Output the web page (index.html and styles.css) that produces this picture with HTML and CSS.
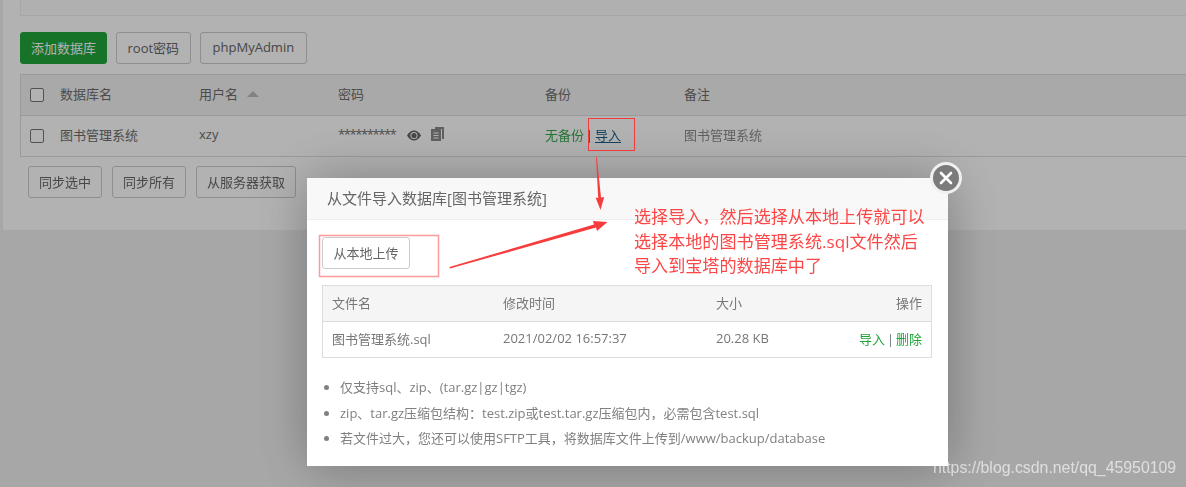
FILE: index.html
```html
<!DOCTYPE html>
<html lang="zh-CN">
<head>
<meta charset="utf-8">
<title>数据库</title>
<link rel="stylesheet" href="styles.css">
</head>
<body>
<main class="panel">
  <div class="topbox"></div>
  <div class="toolbar">
    <button class="btn btn-green">添加数据库</button>
    <button class="btn btn-latin">root密码</button>
    <button class="btn btn-php">phpMyAdmin</button>
  </div>
  <div class="dbtable">
    <div class="dbrow dbhead">
      <span class="check"></span>
      <span>数据库名</span>
      <span class="sortcell">用户名<i class="sort"></i></span>
      <span>密码</span>
      <span>备份</span>
      <span>备注</span>
    </div>
    <div class="dbrow">
      <span class="check"></span>
      <span>图书管理系统</span>
      <span>xzy</span>
      <span class="pwd"><span class="stars">**********</span>
        <svg class="eye" width="14" height="11" viewBox="0 0 14 11"><path d="M0 5.500C2 2 4.400 .5 7 .5S12 2 14 5.500c-2 3.500-4.400 5-7 5S2 9 0 5.500z" fill="#666"/><circle cx="7" cy="5.500" r="3.600" fill="#fff"/><circle cx="7" cy="5.500" r="2.600" fill="#666"/></svg>
        <svg class="copy" width="13" height="14" viewBox="0 0 13 14"><path d="M4 0h9v12h-2V2H4z" fill="#8a8a8a"/><path d="M0 2h10v12H0z" fill="#8a8a8a"/><path d="M2.500 5.500h5v1h-5zM2.500 8h5v1h-5zM2.500 10.500h5v1h-5z" fill="#fff"/></svg>
      </span>
      <span class="backup ops"><span class="green">无备份</span> | <a class="link">导入</a></span>
      <span class="note">图书管理系统</span>
    </div>
  </div>
  <div class="syncbar">
    <button class="btn">同步选中</button>
    <button class="btn">同步所有</button>
    <button class="btn">从服务器获取</button>
  </div>
</main>

<div class="shade"></div>

<section class="modal">
  <header class="modal-title">从文件导入数据库[图书管理系统]</header>
  <span class="close"><svg width="14" height="14" viewBox="0 0 14 14"><path d="M2 2l10 10M12 2L2 12" stroke="#fff" stroke-width="2.600" stroke-linecap="round"/></svg></span>
  <div class="modal-body">
    <button class="btn btn-latin">从本地上传</button>
    <div class="filetable">
      <div class="filerow filehead">
        <span>文件名</span>
        <span>修改时间</span>
        <span>大小</span>
        <span class="right">操作</span>
      </div>
      <div class="filerow">
        <span>图书管理系统.sql</span>
        <span>2021/02/02 16:57:37</span>
        <span>20.28 KB</span>
        <span class="right ops"><span class="green2">导入</span> | <span class="green2">删除</span></span>
      </div>
    </div>
    <ul class="tips">
      <li>仅支持sql、zip、(tar.gz|gz|tgz)</li>
      <li>zip、tar.gz压缩包结构：test.zip或test.tar.gz压缩包内，必需包含test.sql</li>
      <li>若文件过大，您还可以使用SFTP工具，将数据库文件上传到/www/backup/database</li>
    </ul>
  </div>
</section>

<svg class="marks" width="1186" height="487" viewBox="0 0 1186 487">
  <rect x="588.500" y="118.500" width="46" height="32" fill="none" stroke="#f03c3c" stroke-width="1"/>
  <rect x="319.500" y="235.500" width="119" height="41" fill="none" stroke="#ff9a9a" stroke-width="1.500"/>
  <path d="M596 157L598.200 198 595.600 197.500 600.500 210 604.200 197 601 197.500 596.800 157z" fill="#f63c3c"/>
  <path d="M449.500 267L594 224.500 593 221 607.500 222 597 231 596 227.500 450 268.500z" fill="#f63c3c"/>
</svg>

<p class="callout">选择导入，然后选择从本地上传就可以<br>选择本地的图书管理系统.sql文件然后<br>导入到宝塔的数据库中了</p>

<div class="watermark">https://blog.csdn.net/qq_45950109</div>
</body>
</html>
```
FILE: styles.css
```css
* { box-sizing: border-box; }

html, body {
  margin: 0;
  height: 487px;
  overflow: hidden;
}

body {
  position: relative;
  background: #f0f0f0;
  font-family: "Open Sans", "Noto Sans CJK SC", sans-serif;
  font-size: 13px;
  color: #6e6e6e;
  filter: blur(.35px);
}

.panel {
  margin-left: 3px;
  height: 230px;
  padding-left: 17px;
  background: #fff;
}

.topbox {
  height: 16px;
  border: 1px solid #eee;
  border-top: 0;
  border-right: 0;
  background: #fdfdfd;
}

.toolbar {
  display: flex;
  gap: 9px;
  margin-top: 16px;
}

.btn {
  height: 32px;
  padding: 0 10px 2px;
  border: 1px solid #ccc;
  border-radius: 3px;
  background: #fff;
  color: #666;
  font: inherit;
  white-space: nowrap;
}

.btn-latin { padding: 0 10.500px 2px; }
.btn-php { padding: 0 12px 2px; }

.btn-green {
  background: #20a53a;
  border-color: #20a53a;
  color: #fff;
}

.dbtable {
  margin-top: 10px;
  border: 1px solid #ddd;
  border-right: 0;
}

.dbrow {
  display: grid;
  grid-template-columns: 39px 139px 139px 207px 139px 1fr;
  align-items: center;
  height: 40px;
  padding-bottom: 4px;
}

.dbhead {
  height: 41px;
  background: #f2f2f2;
  border-bottom: 1px solid #ddd;
}

.check {
  display: block;
  width: 14px;
  height: 14px;
  margin: 3px 0 0 9px;
  border: 1px solid #777;
  border-radius: 2px;
  background: #fff;
}

.sortcell {
  display: flex;
  align-items: center;
}

.sort {
  width: 0;
  height: 0;
  margin: 2px 0 0 9px;
  border-left: 6.500px solid transparent;
  border-right: 6.500px solid transparent;
  border-bottom: 6px solid #bbb;
}

.pwd {
  display: flex;
  align-items: center;
}

.stars { letter-spacing: -1.400px; }

.eye { margin: 3px 0 0 11px; }
.copy { margin: 0 0 0 10px; }

.ops { word-spacing: -1.500px; }

.green { color: #38a84c; }
.green2 { color: #20a53a; }
.link {
  color: #1c5f8c;
  text-decoration: underline;
  text-underline-offset: 2px;
}
.note { color: #8c8c8c; }

.syncbar {
  display: flex;
  gap: 10px;
  margin: 9px 0 0 8px;
}

.shade {
  position: absolute;
  inset: 0;
  background: rgba(0, 0, 0, .3);
}

.modal {
  position: absolute;
  left: 307px;
  top: 178px;
  width: 641px;
  height: 288px;
  background: #fff;
  box-shadow: 1px 1px 50px rgba(0, 0, 0, .3);
}

.modal-title {
  height: 42px;
  padding-left: 20px;
  line-height: 40px;
  font-size: 15px;
  color: #666;
  background: #f8f8f8;
  border-bottom: 1px solid #eee;
}

.close {
  position: absolute;
  right: -14px;
  top: -16px;
  display: flex;
  align-items: center;
  justify-content: center;
  width: 32px;
  height: 32px;
  border: 3px solid #f0f0f0;
  border-radius: 50%;
  background: #7b7b7b;
}

.modal-body {
  padding: 17px 16px 0 15px;
}

.filetable {
  margin-top: 16px;
  border: 1px solid #ddd;
}

.filerow {
  display: grid;
  grid-template-columns: 171px 213px 120px 1fr;
  align-items: center;
  height: 35px;
  padding: 0 9px 3px;
  color: #777;
}

.filehead {
  height: 36px;
  background: #f5f5f5;
  border-bottom: 1px solid #ddd;
}

.right { text-align: right; }

.tips {
  margin: 17px 0 0;
  padding: 0 0 0 18px;
  color: #808080;
}

.tips li {
  height: 25.500px;
  line-height: 25.500px;
  white-space: nowrap;
}

.marks {
  position: absolute;
  left: 0;
  top: 0;
}

.callout {
  position: absolute;
  left: 634px;
  top: 205px;
  margin: 0;
  font-size: 17.100px;
  line-height: 24.500px;
  color: #fb4747;
  white-space: nowrap;
}

.watermark {
  position: absolute;
  left: 933px;
  top: 458px;
  font-family: "Liberation Sans", sans-serif;
  font-size: 15.850px;
  line-height: 20px;
  color: rgba(255, 255, 255, .62);
  white-space: nowrap;
}
```
